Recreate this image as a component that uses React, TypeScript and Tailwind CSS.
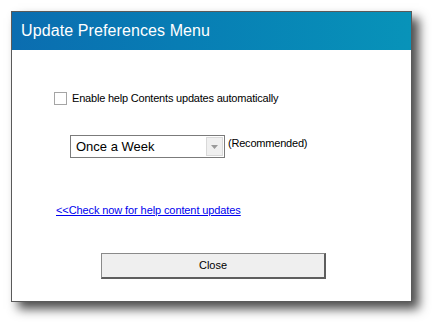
import React from "react";

export default function App() {
  const ui = { fontFamily: '"Liberation Sans", Arial, sans-serif' };
  return (
    <div className="w-[432px] h-[322px] bg-white overflow-hidden" style={ui}>
      <div className="ml-[11px] mt-[11px] w-[401px] h-[291px] border border-[#5a5a5a] bg-white flex flex-col shadow-[7px_7px_10px_rgba(0,0,0,0.7)]">
        <div className="h-[38px] flex items-center pl-[9px] bg-gradient-to-r from-[#0b6db0] to-[#0893b9]">
          <span className="text-white text-[16px] leading-none tracking-[0.1px]">
            Update Preferences Menu
          </span>
        </div>
        <div className="flex flex-col pl-[42px]">
          <div className="mt-[42px] flex items-center">
            <div className="w-[13px] h-[13px] border border-[#a5a5a5] bg-white" />
            <span className="ml-[5px] text-[11px] text-black leading-none tracking-[-0.2px]">
              Enable help Contents updates automatically
            </span>
          </div>
          <div className="mt-[30px] ml-[16px] flex items-start">
            <div className="w-[155px] h-[23px] border border-[#7b7b7b] bg-white flex items-stretch">
              <span className="flex-1 pl-[5px] text-[13px] leading-[21px] text-black">Once a Week</span>
              <div className="w-[17px] my-[1px] mr-[1px] bg-[#f0f0f0] border border-[#d9d9d9] flex items-center justify-center">
                <svg width="7" height="4" viewBox="0 0 7 4">
                  <path d="M0 0H7L3.5 4Z" fill="#9a9a9a" />
                </svg>
              </div>
            </div>
            <span className="ml-[3px] mt-[3px] text-[11px] leading-none text-black tracking-[-0.2px]">(Recommended)</span>
          </div>
          <div className="mt-[39px] ml-[2px]">
            <span className="text-[11px] leading-none text-[#0000ee] underline tracking-[-0.1px]">
              &lt;&lt;Check now for help content updates
            </span>
          </div>
          <div className="mt-[32px] ml-[47px]">
            <button className="w-[225px] h-[26px] bg-[#efefef] border border-[#8a8a8a] border-r-[2px] border-b-[2px] border-r-[#5e5e5e] border-b-[#5e5e5e] text-[11px] text-black flex items-center justify-center">
              Close
            </button>
          </div>
        </div>
      </div>
    </div>
  );
}
